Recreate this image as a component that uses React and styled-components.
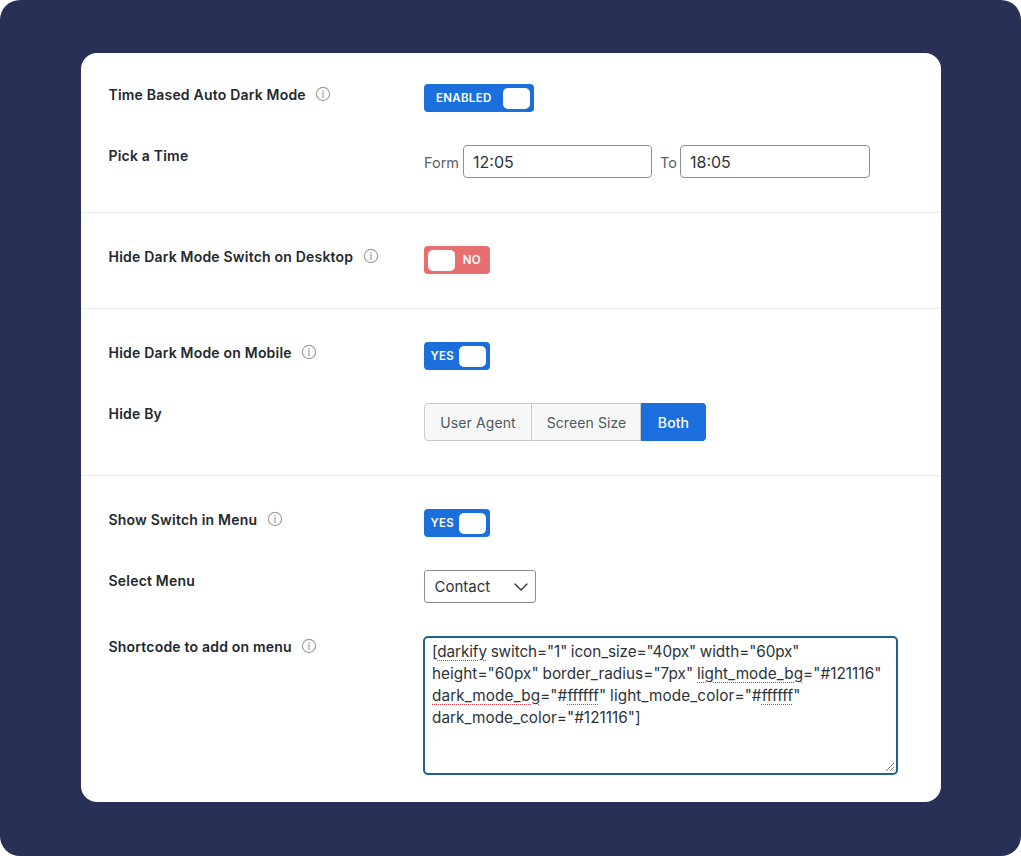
import React from "react";
import styled, { createGlobalStyle } from "styled-components";
import { ChevronDown } from "lucide-react";

const Global = createGlobalStyle`
  html, body { margin: 0; padding: 0; background: #fff; }
  body { font-family: Inter, "Liberation Sans", sans-serif; }
  * { box-sizing: border-box; }
`;

const Frame = styled.div`
  width: 1021px;
  height: 856px;
  background: #293056;
  border-radius: 20px;
  padding: 53px 80px 54px 81px;
`;

const Card = styled.main`
  background: #fff;
  border-radius: 16px;
  height: 749px;
  overflow: hidden;
`;

const Section = styled.section`
  display: flex;
  flex-direction: column;
  gap: 33px;
  padding: ${(p) => p.$top || 33}px 43px ${(p) => p.$bottom || 33}px 27.5px;
  & + & { border-top: 1px solid #e9ebee; }
`;

const Row = styled.div`
  display: grid;
  grid-template-columns: 315.5px 1fr;
  align-items: start;
`;

const LabelWrap = styled.div`
  display: flex;
  align-items: center;
  gap: 9.5px;
  height: 20px;
`;

const Label = styled.label`
  font-size: 14px;
  font-weight: 600;
  letter-spacing: 0.2px;
  color: #23282d;
  white-space: nowrap;
`;

const TipIcon = styled.svg`
  width: 16px;
  height: 16px;
  color: #a0a0a0;
`;

const ToggleBox = styled.div`
  display: flex;
  align-items: center;
  justify-content: space-between;
  flex-direction: ${(p) => (p.$off ? "row-reverse" : "row")};
  height: 28px;
  width: ${(p) => p.$w}px;
  background: ${(p) => (p.$off ? "#e86f70" : "#1a6fdc")};
  border-radius: 4px;
  padding: ${(p) => (p.$off ? "0 9px 0 4px" : `0 4px 0 ${p.$w > 80 ? 12 : 6.5}px`)};
`;

const ToggleText = styled.span`
  font-size: 11.5px;
  font-weight: 600;
  letter-spacing: 0.3px;
  color: #fff;
`;

const Knob = styled.span`
  width: 27px;
  height: 21px;
  border-radius: 5px;
  background: #fff;
`;

const Times = styled.div`
  display: flex;
  align-items: center;
  height: 33px;
`;

const TimeLabel = styled.span`
  font-size: 14.5px;
  color: #5c6267;
  padding-top: 2px;
  margin-right: ${(p) => p.$mr}px;
  margin-left: ${(p) => p.$ml || 0}px;
`;

const TimeInput = styled.input`
  width: ${(p) => p.$w}px;
  height: 33px;
  border: 1px solid #8c8f94;
  border-radius: 4px;
  padding: 1px 8px 0 9px;
  font: 400 16px Inter, sans-serif;
  color: #2c3338;
  background: #fff;
  outline: none;
`;

const Segments = styled.div`
  display: inline-flex;
  height: 38px;
`;

const Segment = styled.button`
  font: ${(p) => (p.$active ? 500 : 400)} 14px Inter, sans-serif;
  letter-spacing: 0.1px;
  padding: 0 0 0 ${(p) => (p.$first ? 0 : 1)}px;
  width: ${(p) => p.$w}px;
  color: ${(p) => (p.$active ? "#fff" : "#50575e")};
  background: ${(p) => (p.$active ? "#1a6fdc" : "#f6f7f7")};
  border: 1px solid ${(p) => (p.$active ? "#1a6fdc" : "#c9cbce")};
  border-left-width: ${(p) => (p.$first ? 1 : 0)}px;
  border-radius: ${(p) => (p.$first ? "4px 0 0 4px" : p.$active ? "0 4px 4px 0" : "0")};
`;

const Select = styled.div`
  display: flex;
  align-items: center;
  justify-content: space-between;
  width: 112px;
  height: 33px;
  border: 1px solid #8c8f94;
  border-radius: 3px;
  padding: 0 2px 0 9.5px;
  font-size: 15px;
  color: #2c3338;
  background: #fff;
`;

const Chevron = styled(ChevronDown)`
  width: 24px;
  height: 24px;
  color: #2c3338;
  stroke-width: 1.3;
`;

const Area = styled.div`
  position: relative;
  width: 475px;
  height: 139px;
  margin-left: -1px;
  border: 2px solid #1f6098;
  border-radius: 5px;
  padding: 3px 7px;
  font-size: 15.3px;
  word-spacing: -0.5px;
  line-height: 22px;
  color: #2c3338;
  background: #fff;
`;

const Line = styled.div`
  white-space: nowrap;
  letter-spacing: ${(p) => p.$ls}px;
`;

const Spell = styled.span`
  text-decoration: underline dotted #d03a46 1px;
  text-underline-offset: 3px;
`;

const Grip = styled.svg`
  position: absolute;
  right: 1px;
  bottom: 1px;
  width: 10px;
  height: 10px;
`;

const Tip = () => (
  <TipIcon viewBox="0 0 16 16" fill="none" stroke="currentColor">
    <circle cx="8" cy="8" r="6.6" strokeWidth="1.2" />
    <path d="M6.9 7.1H8.2L7.8 11.3H9" strokeWidth="1.1" />
    <circle cx="8.1" cy="4.9" r="0.8" fill="currentColor" stroke="none" />
  </TipIcon>
);

const Toggle = ({ text, w, off }) => (
  <ToggleBox $w={w} $off={off}>
    <ToggleText>{text}</ToggleText>
    <Knob />
  </ToggleBox>
);

const Lab = ({ children, tip }) => (
  <LabelWrap>
    <Label>{children}</Label>
    {tip && <Tip />}
  </LabelWrap>
);

export default function App() {
  return (
    <>
      <Global />
      <Frame>
        <Card>
          <Section $top={31} $bottom={34}>
            <Row>
              <Lab tip>Time Based Auto Dark Mode</Lab>
              <Toggle text="ENABLED" w={110} />
            </Row>
            <Row>
              <Lab>Pick a Time</Lab>
              <Times>
                <TimeLabel $mr={4}>Form</TimeLabel>
                <TimeInput $w={189} defaultValue="12:05" />
                <TimeLabel $ml={8} $mr={3}>To</TimeLabel>
                <TimeInput $w={190} defaultValue="18:05" />
              </Times>
            </Row>
          </Section>
          <Section $top={33} $bottom={34}>
            <Row>
              <Lab tip>Hide Dark Mode Switch on Desktop</Lab>
              <Toggle text="NO" w={66} off />
            </Row>
          </Section>
          <Section $top={33} $bottom={34}>
            <Row>
              <Lab tip>Hide Dark Mode on Mobile</Lab>
              <Toggle text="YES" w={66} />
            </Row>
            <Row>
              <Lab>Hide By</Lab>
              <Segments>
                <Segment $first $w={108}>User Agent</Segment>
                <Segment $w={109}>Screen Size</Segment>
                <Segment $active $w={65}>Both</Segment>
              </Segments>
            </Row>
          </Section>
          <Section $top={33} $bottom={27}>
            <Row>
              <Lab tip>Show Switch in Menu</Lab>
              <Toggle text="YES" w={66} />
            </Row>
            <Row>
              <Lab>Select Menu</Lab>
              <Select>
                Contact
                <Chevron />
              </Select>
            </Row>
            <Row>
              <Lab tip>Shortcode to add on menu</Lab>
              <Area>
                <Line $ls={-0.1}>[<Spell>darkify</Spell> switch="1" icon_size="40px" width="60px"</Line>
                <Line $ls={0.05}>height="60px" border_radius="7px" <Spell>light_mode_bg</Spell>="#121116"</Line>
                <Line $ls={0.1}><Spell>dark_mode_bg</Spell>="#<Spell>ffffff</Spell>" light_mode_color="#<Spell>ffffff</Spell>"</Line>
                <Line $ls={0.04}>dark_mode_color="#121116"]</Line>
                <Grip viewBox="0 0 10 10">
                  <path d="M1 9 9 1M5 9 9 5" stroke="#777" strokeWidth="1" fill="none" />
                </Grip>
              </Area>
            </Row>
          </Section>
        </Card>
      </Frame>
    </>
  );
}
